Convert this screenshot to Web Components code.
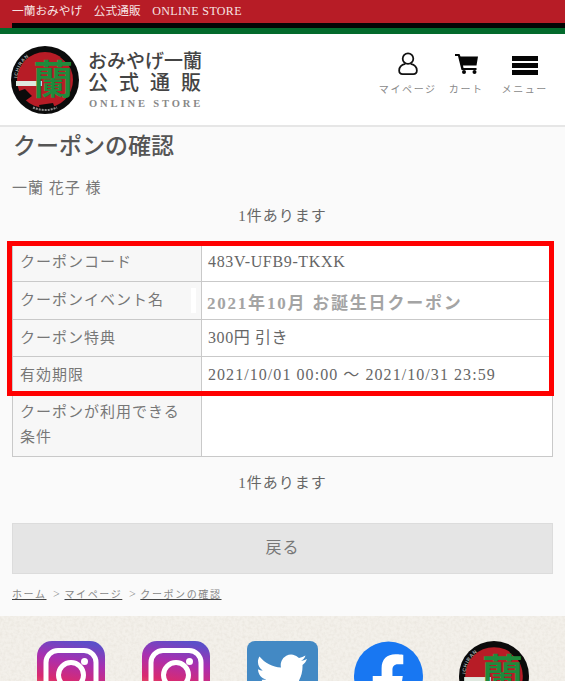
<!DOCTYPE html>
<html lang="ja"><head><meta charset="utf-8"><title>クーポンの確認</title>
<style>
html,body{margin:0;padding:0;height:681px;overflow:hidden;background:#fafafa}
body{font-family:"Liberation Serif","Noto Sans CJK JP",serif;color:#666;width:565px}
</style></head><body>
<site-topbar>一蘭おみやげ　公式通販　<span style="font-size:12px;letter-spacing:.35px">ONLINE STORE</span></site-topbar>
<site-header></site-header>
<main-panel>
  <page-title>クーポンの確認</page-title>
  <user-name>一蘭 花子 様</user-name>
  <count-line style="--top:6px">1件あります</count-line>
  <coupon-table>
    <coupon-row label="クーポンコード" h="38" style="--ls:.65px">483V-UFB9-TKXK</coupon-row>
    <coupon-row label="クーポンイベント名" h="38" special>2021年10月 お誕生日クーポン</coupon-row>
    <coupon-row label="クーポン特典" h="37" style="--ls:.6px">300円 引き</coupon-row>
    <coupon-row label="有効期限" h="37" style="--ls:1.06px">2021/10/01 00:00 ～ 2021/10/31 23:59</coupon-row>
    <coupon-row label="クーポンが利用できる条件" h="63"></coupon-row>
  </coupon-table>
  <count-line style="--top:15px">1件あります</count-line>
  <back-button>戻る</back-button>
  <bread-crumbs></bread-crumbs>
</main-panel>
<site-footer></site-footer>
<script>
function def(name, html, extra){
  const t=document.createElement('template');t.innerHTML=html;
  customElements.define(name,class extends HTMLElement{
    constructor(){super();this.attachShadow({mode:'open'}).appendChild(t.content.cloneNode(true));}
    connectedCallback(){extra&&extra.call(this,this.shadowRoot);}
  });
}
const SERIF='"Liberation Serif","Noto Sans CJK JP",serif';
const emblem=(id,size,bx,by,fs)=>`<svg width="${size}" height="${size}" viewBox="0 0 68 68" style="display:block;flex:none">
<defs><path id="${id}" d="M6.500 32A27.500 27.500 0 0 1 40 6.500"/></defs>
<circle cx="34" cy="34" r="34" fill="#0b0b0b"/><circle cx="34" cy="34" r="28" fill="#b71c26"/>
<path d="M5 46l9-3 7 7-7 5zM49 11l9 8 3-1-7-9zM28 59l14-2 2 5-15 1z" fill="#0b0b0b"/>
<path d="M22 61.500A30 30 0 0 0 46 61.500" fill="none" stroke="#8e8e8e" stroke-width="2" stroke-dasharray="2 1"/>
<text font-family="Liberation Sans" font-size="5" font-weight="700" fill="#a8a8a8" letter-spacing=".6"><textPath href="#${id}">ICHIRAN</textPath></text>
<rect x="5" y="35" width="26" height="5" fill="#dfe8df"/>
<text x="${bx}" y="${by}" text-anchor="middle" font-family="Noto Sans CJK JP" font-size="${fs}" font-weight="700" fill="#1f8a3c">蘭</text>
</svg>`;
def('site-topbar',`<style>
:host{display:block;height:34px;box-sizing:border-box;background:#b71c26;border-bottom:6px solid #036a2c;position:relative;font:11.7px/23px ${SERIF};color:#f6e4e4;padding-left:12px}
.b{height:5px;background:#050505}
.t{height:23px;white-space:nowrap}
</style><div class="t"><slot></slot></div><div class="b"></div>`);
def('nav-item',`<style>
:host{display:flex;flex-direction:column;align-items:center;width:58.5px;font:10px/12px ${SERIF};letter-spacing:1.6px;color:#8a8a8a;white-space:nowrap}
.i{height:34px;display:flex;align-items:flex-end;justify-content:center;margin-bottom:9px}
</style><div class="i"><slot name="icon"></slot></div><slot></slot>`);
def('site-logo',`<style>
:host{display:flex;align-items:flex-start;gap:9px}
.e{margin-top:12px}
.w{padding-top:14px;color:#444;white-space:nowrap}
.a{font:500 19px/23px "Noto Sans CJK JP",sans-serif;width:114px}
.b{font:500 20px/22px "Noto Sans CJK JP",sans-serif;letter-spacing:11px}
.c{font:bold 10.5px/12px "Liberation Serif",serif;letter-spacing:2.9px;color:#888;margin-top:5px;padding-left:1px}
</style>
<div class="e">${emblem('h1',68,42,48,40)}</div>
<div class="w"><div class="a">おみやげ一蘭</div><div class="b">公式通販</div><div class="c">ONLINE STORE</div></div>`);
def('site-header',`<style>
:host{display:flex;justify-content:space-between;height:93px;box-sizing:border-box;background:#fff;border-bottom:2px solid #e6e6e6;padding:0 11px}
nav{display:flex;padding-top:7px}
svg{display:block}
</style>
<site-logo></site-logo>
<nav>
<nav-item>マイページ<svg slot="icon" width="20" height="23" viewBox="0 0 22 26" fill="none" stroke="#111" stroke-width="2"><circle cx="11" cy="7.5" r="6"/><path d="M8 13.500C3.500 14.500 1 17 1 21c0 2.500 1.500 4 4 4h12c2.500 0 4-1.500 4-4 0-4-2.500-6.500-7-7.500"/></svg></nav-item>
<nav-item>カート<svg slot="icon" width="23" height="20" viewBox="0 0 23 20" fill="#050505" style="margin-bottom:1px"><path d="M0 0h4.500l1 2.500H23l-1.500 9H8l.5 2.500h13v2h-15L3 2H0z"/><circle cx="9" cy="18" r="2"/><circle cx="19.500" cy="18" r="2"/></svg></nav-item>
<nav-item>メニュー<svg slot="icon" width="26" height="19" viewBox="0 0 26 19" fill="#050505"><rect width="26" height="5"/><rect y="7" width="26" height="5"/><rect y="14" width="26" height="5"/></svg></nav-item>
</nav>`);
def('main-panel',`<style>:host{display:block;height:489px;box-sizing:border-box;padding:0 12px;background:#fafafa}</style><slot></slot>`);
def('page-title',`<style>:host{display:block;font:500 23px/34px "Noto Sans CJK JP",sans-serif;color:#555;margin-left:1px;height:38px}</style><slot></slot>`);
def('user-name',`<style>:host{display:block;font:15px/22px ${SERIF};letter-spacing:1px;color:#777;margin-top:12px}</style><slot></slot>`);
def('count-line',`<style>:host{display:block;margin-top:var(--top);font:15px/22px ${SERIF};letter-spacing:1px;color:#666;text-align:center}</style><slot></slot>`);
def('coupon-table',`<style>
:host{display:block;position:relative;margin-top:16px;border:1px solid #c9c9c9;border-bottom:0;width:541px;box-sizing:border-box}
.red{position:absolute;left:-6px;top:-3px;width:547px;height:155px;box-sizing:border-box;border:5px solid #f00;pointer-events:none}
</style><slot></slot><div class="red"></div>`);
def('coupon-row',`<style>
:host{display:grid;grid-template-columns:189px 1fr;border-bottom:1px solid #c9c9c9;box-sizing:border-box;position:relative;overflow:hidden}
.l{background:#f7f7f7;border-right:1px solid #c9c9c9;padding:6px 7px 0;font:15px/25px ${SERIF};letter-spacing:1px;color:#777}
.v{background:#fff;padding:0 6px 2px;font:16px/25px ${SERIF};letter-spacing:var(--ls,.8px);color:#666;white-space:nowrap;display:flex;align-items:center}
:host([special]) .v{font-weight:700;font-size:17px;color:#a4a4a4;padding:6px 0 0 5px;letter-spacing:1.78px}
.p{display:none;position:absolute;left:178px;top:6px;width:5px;height:25px;background:#fff}
:host([special]) .p{display:block}
</style><div class="l"></div><div class="v"><slot></slot></div><div class="p"></div>`,function(r){
  r.querySelector('.l').textContent=this.getAttribute('label');
  this.style.height=this.getAttribute('h')+'px';
});
def('back-button',`<style>
:host{display:flex;align-items:center;justify-content:center;margin-top:29px;height:51px;box-sizing:border-box;padding-bottom:5px;background:#e5e5e5;border:1px solid #dcdcdc;font:16px ${SERIF};letter-spacing:1px;color:#777}
</style><slot></slot>`);
def('bread-crumbs',`<style>
:host{display:block;margin-top:12px;font:10px/16px ${SERIF};letter-spacing:1.6px;color:#888;white-space:nowrap}
a{color:#888;text-decoration:underline;text-decoration-color:#444}
i{font-style:normal;display:inline-block;margin:0 4px 0 6px;font-size:12px;letter-spacing:0;width:8px;text-align:center}
</style><a>ホーム</a><i>&gt;</i><a>マイページ</a><i>&gt;</i><a>クーポンの確認</a>`);
const insta=id=>`<svg width="68" height="68" viewBox="0 0 68 68"><defs><linearGradient id="${id}" x1="0.6" y1="0" x2="0.4" y2="1"><stop offset="0" stop-color="#5b4fc9"/><stop offset=".3" stop-color="#a92fb0"/><stop offset=".6" stop-color="#d92a70"/><stop offset="1" stop-color="#f9a03c"/></linearGradient></defs><rect width="68" height="68" rx="15" fill="url(#${id})"/><rect x="9" y="9.500" width="50" height="50" rx="12" fill="none" stroke="#fff" stroke-width="5"/><circle cx="34" cy="34" r="12.500" fill="none" stroke="#fff" stroke-width="5"/><circle cx="47.500" cy="20.500" r="3.500" fill="#fff"/></svg>`;
def('site-footer',`<style>
:host{display:block;position:relative;height:65px;overflow:hidden;background:#f3f0ea}
.tex{position:absolute;left:0;top:0}
.r{position:relative;display:flex;padding:25px 0 0 37px;align-items:flex-start}
svg{display:block;flex:none}
.r>svg{margin-right:37px}
</style>
<svg class="tex" width="565" height="65"><filter id="n"><feTurbulence type="fractalNoise" baseFrequency=".35" numOctaves="2" seed="3"/><feColorMatrix values="0 0 0 0 .55 0 0 0 0 .5 0 0 0 0 .42 .6 0 0 0 -.22"/></filter><rect width="565" height="65" filter="url(#n)" opacity=".55"/></svg>
<div class="r">${insta('g1')}${insta('g2')}
<svg width="71" height="70" viewBox="0 0 71 70" style="margin-right:36px"><rect width="71" height="70" rx="8" fill="#4389c4"/><path d="M60 18c-2 1-4 1.500-6 2 2-1.200 3.800-3 4.500-5.500-2 1.200-4.200 2-6.500 2.500a10.500 10.500 0 0 0-18 9.500C25.500 26 17.800 22 12.500 15.500c-3 5-1.500 11 3.200 14-1.700 0-3.300-.5-4.700-1.300 0 5 3.600 9.300 8.400 10.300-1.500.4-3 .5-4.700.2 1.400 4.200 5.300 7.200 9.800 7.300A21 21 0 0 1 9 50.500 30 30 0 0 0 55.500 24c2-1.500 3.500-3.500 4.500-6z" fill="#fff"/></svg>
<svg width="69" height="70" viewBox="0 0 70 70" style="margin-right:36px"><circle cx="35" cy="35" r="35" fill="#1877f2"/><path d="M48 45l1.500-10H39v-6.500c0-2.800 1.400-5.500 5.800-5.500H50V13.500S46 13 42 13c-8.500 0-14 5-14 14.200V35H19v10h9v25h11V45z" fill="#fff"/></svg>
${emblem('f1',70,42,47,40)}
</div>`);
</script>
</body></html>
